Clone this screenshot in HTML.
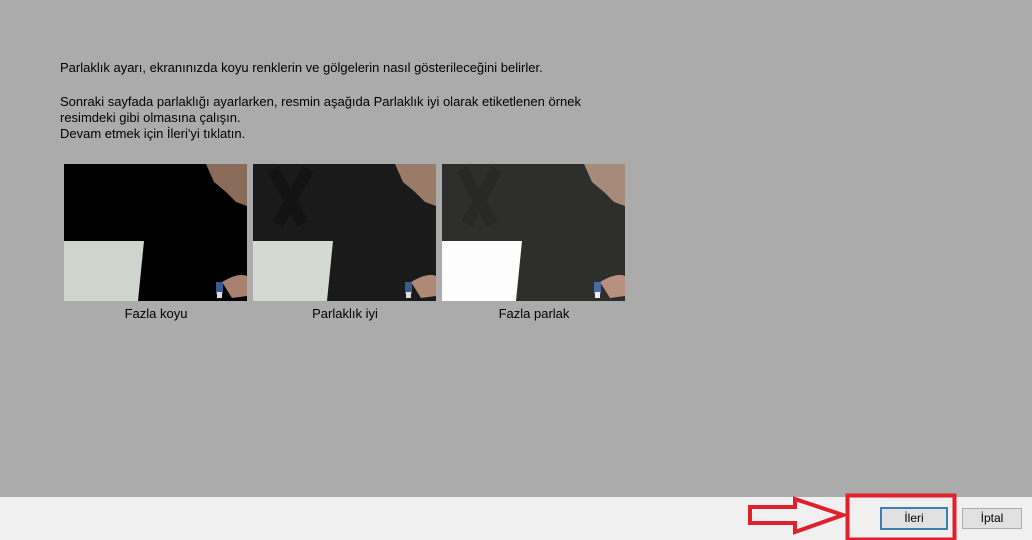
<!DOCTYPE html>
<html><head><meta charset="utf-8"><style>
body{margin:0;width:1032px;height:540px;background:#ababab;font-family:"Liberation Sans",sans-serif;font-size:13px;color:#000;position:relative;overflow:hidden}
.t{position:absolute;left:60px;line-height:16px}
.cap{position:absolute;top:306px;width:184px;text-align:center;font-size:13px}
.bar{position:absolute;left:0;top:497px;width:1032px;height:43px;background:#f0f0f0}
.btn{position:absolute;top:508px;height:19px;border:1px solid #adadad;background:#e1e1e1;text-align:center;line-height:19px;font-size:12px}
</style></head><body>
<div class="t" style="top:60px">Parlaklık ayarı, ekranınızda koyu renklerin ve gölgelerin nasıl gösterileceğini belirler.</div>
<div class="t" style="top:94px">Sonraki sayfada parlaklığı ayarlarken, resmin aşağıda Parlaklık iyi olarak etiketlenen örnek<br>resimdeki gibi olmasına çalışın.<br>Devam etmek için İleri'yi tıklatın.</div>
<svg style="position:absolute;left:0;top:0" width="640" height="310">
<rect x="64" y="164" width="183" height="137" fill="#000"/>
<g transform="translate(64,164)"><path d="M0 77 L80 77 L74 137 L0 137Z" fill="#cfd4cd"/><path d="M142 0 L183 0 L183 42 L172 38 L162 28 L150 18Z" fill="#8a6b5a"/><path d="M158 118 Q175 108 183 112 L183 132 L168 134Z" fill="#a88070"/><rect x="152" y="118" width="7" height="12" fill="#3a5a90"/><rect x="153" y="128" width="5" height="6" fill="#ddd"/></g>
<rect x="253" y="164" width="183" height="137" fill="#1a1a1a"/>
<g transform="translate(253,164)"><path d="M20 5 L50 60 M55 5 L25 60" stroke="#131313" stroke-width="12"/><path d="M0 77 L80 77 L74 137 L0 137Z" fill="#d4d9d2"/><path d="M142 0 L183 0 L183 42 L172 38 L162 28 L150 18Z" fill="#9a7b6a"/><path d="M158 118 Q175 108 183 112 L183 132 L168 134Z" fill="#b08878"/><rect x="152" y="118" width="7" height="12" fill="#3a5a90"/><rect x="153" y="128" width="5" height="6" fill="#ddd"/></g>
<rect x="442" y="164" width="183" height="137" fill="#2e2e2c"/>
<g transform="translate(442,164)"><path d="M20 5 L50 60 M55 5 L25 60" stroke="#282826" stroke-width="12"/><path d="M0 77 L80 77 L74 137 L0 137Z" fill="#fdfdfd"/><path d="M142 0 L183 0 L183 42 L172 38 L162 28 L150 18Z" fill="#a88a7a"/><path d="M158 118 Q175 108 183 112 L183 132 L168 134Z" fill="#b89080"/><rect x="152" y="118" width="7" height="12" fill="#4a6aa0"/><rect x="153" y="128" width="5" height="6" fill="#eee"/></g>
</svg>
<div class="cap" style="left:64px">Fazla koyu</div>
<div class="cap" style="left:253px">Parlaklık iyi</div>
<div class="cap" style="left:442px">Fazla parlak</div>
<div class="bar"></div>
<div class="btn" style="left:880px;width:64px;border:2px solid #3c7fb1;top:507px;height:19px">İleri</div>
<div class="btn" style="left:962px;width:58px">İptal</div>
<svg style="position:absolute;left:0;top:0" width="1032" height="540">
<rect x="847.5" y="495.5" width="107" height="44" fill="none" stroke="#e0202a" stroke-width="4"/>
<path d="M750 507 L795 507 L795 499 L843 515 L795 532 L795 523 L750 523Z" fill="none" stroke="#e0202a" stroke-width="4"/>
</svg>
</body></html>
